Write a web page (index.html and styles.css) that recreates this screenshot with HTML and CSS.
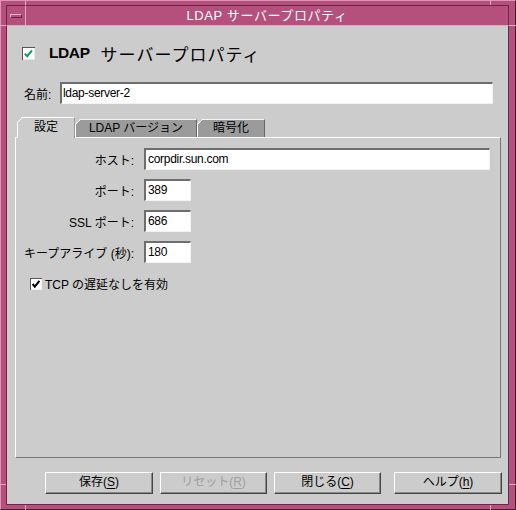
FILE: index.html
```html
<!DOCTYPE html>
<html lang="ja">
<head>
<meta charset="utf-8">
<title>LDAP サーバープロパティ</title>
<link rel="stylesheet" href="styles.css">
</head>
<body>
<div class="frame">
  <span class="mark v tl"></span>
  <span class="mark h lt"></span>
  <span class="mark v tr"></span>
  <span class="mark h rt"></span>
  <span class="mark h lb"></span>
  <span class="mark v bl"></span>
  <span class="mark v br"></span>
  <span class="mark h rb"></span>
  <div class="titlebar">
    <div class="menubtn"><span class="minus"></span></div>
    <div class="title">LDAP サーバープロパティ</div>
  </div>
  <div class="client">
    <div class="heading">
      <svg class="bigcheck" width="13" height="13" viewBox="0 0 13 13">
        <rect x="0" y="0" width="13" height="13" fill="#555"/>
        <rect x="1" y="1" width="12" height="12" fill="#e8e8e8"/>
        <rect x="1" y="1" width="11" height="11" fill="#fff"/>
        <path d="M2.8 6.6 L5.2 9.2 L10 3.4" fill="none" stroke="#16946a" stroke-width="2"/>
      </svg>
      <span class="h-latin">LDAP</span><span class="h-jp">サーバープロパティ</span>
    </div>
    <div class="namerow">
      <span class="namelabel">名前:</span>
      <div class="field namefield">ldap-server-2</div>
    </div>
    <div class="tabs">
      <div class="tab sel tab1">設定</div>
      <div class="tab tab2">LDAP バージョン</div>
      <div class="tab tab3">暗号化</div>
    </div>
    <div class="panel">
      <div class="form">
        <span class="lbl">ホスト:</span>
        <div class="field hostfield">corpdir.sun.com</div>
        <span class="lbl">ポート:</span>
        <div class="field portfield">389</div>
        <span class="lbl">SSL ポート:</span>
        <div class="field portfield">686</div>
        <span class="lbl">キープアライブ (秒):</span>
        <div class="field portfield">180</div>
      </div>
      <div class="cbrow">
        <svg class="smallcheck" width="12" height="12" viewBox="0 0 12 12">
          <rect x="0" y="0" width="12" height="12" fill="#5a5a5a"/>
          <rect x="1" y="1" width="11" height="11" fill="#f4f4f4"/>
          <rect x="1" y="1" width="10" height="10" fill="#fff"/>
          <path d="M2.6 6 L4.8 8.6 L9.4 2.8" fill="none" stroke="#000" stroke-width="2"/>
        </svg>
        <span>TCP の遅延なしを有効</span>
      </div>
    </div>
    <div class="buttons">
      <div class="btn b1">保存(<u>S</u>)</div>
      <div class="btn b2 disabled">リセット(<u>R</u>)</div>
      <div class="btn b3">閉じる(<u>C</u>)</div>
      <div class="btn b4">ヘルプ(<u>h</u>)</div>
    </div>
  </div>
</div>
</body>
</html>
```
FILE: styles.css
```css
html, body {
  margin: 0;
  padding: 0;
}
body {
  width: 516px;
  height: 510px;
  overflow: hidden;
  font-family: "Liberation Sans", "Noto Sans CJK JP", sans-serif;
  font-size: 12px;
  color: #000;
}
.frame {
  position: relative;
  box-sizing: border-box;
  width: 516px;
  height: 510px;
  background: #b5507c;
  border: 1px solid;
  border-color: #dc96b4 #4d1830 #4d1830 #dc96b4;
  padding: 4px 6px 4px 5px;
  display: flex;
  flex-direction: column;
}
.mark {
  position: absolute;
  background: #e6a6c2;
}
.mark.v { width: 1px; height: 5px; }
.mark.h { width: 6px; height: 1px; }
.mark.tl { left: 24px; top: -1px; }
.mark.lt { left: -1px; top: 24px; }
.mark.tr { left: 489px; top: -1px; }
.mark.rt { right: -1px; top: 24px; width: 7px; }
.mark.lb { left: -1px; top: 483px; }
.mark.bl { left: 24px; bottom: -1px; }
.mark.br { left: 489px; bottom: -1px; }
.mark.rb { right: -1px; top: 483px; width: 7px; }

.titlebar {
  display: flex;
  height: 21px;
  flex: none;
}
.menubtn {
  box-sizing: border-box;
  width: 20px;
  height: 21px;
  border-style: solid;
  border-width: 1px;
  border-color: #6b2545 #e4a3c0 #e4a3c0 #6b2545;
  display: flex;
  align-items: center;
  justify-content: center;
}
.minus {
  box-sizing: border-box;
  width: 12px;
  height: 4px;
  border: 1px solid;
  border-color: #ecb4cd #6b2545 #6b2545 #ecb4cd;
  background: #b5507c;
}
.title {
  flex: 1;
  box-sizing: border-box;
  height: 21px;
  border-style: solid;
  border-width: 1px 1px 1px 0;
  border-color: #6b2545 #6b2545 #e4a3c0 #6b2545;
  color: #fff;
  text-align: center;
  line-height: 19px;
  font-size: 13px;
  letter-spacing: 0.6px;
}
.client {
  flex: 1;
  background: #cccccc;
  border-left: 1px solid #6b2545;
  border-right: 1px solid #6b2545;
  border-bottom: 1px solid #6b2545;
  display: flex;
  flex-direction: column;
  padding-top: 18px;
}
.heading {
  display: flex;
  align-items: center;
  height: 18px;
  margin-left: 15px;
}
.bigcheck {
  flex: none;
  margin-right: 14px;
  margin-top: 1px;
}
.h-latin {
  font-weight: bold;
  font-size: 15.5px;
  letter-spacing: -0.4px;
}
.h-jp {
  margin-left: 11px;
  font-size: 17px;
  letter-spacing: 1px;
}
.namerow {
  display: flex;
  align-items: center;
  margin-top: 20px;
  margin-left: 17px;
}
.namelabel {
  width: 36px;
}
.field {
  box-sizing: border-box;
  height: 22px;
  background: #fff;
  border-style: solid;
  border-width: 2px 1px 1px 2px;
  border-color: #6e6e6e #f2f2f2 #f2f2f2 #6e6e6e;
  padding-left: 2px;
  line-height: 19px;
  letter-spacing: -0.3px;
  white-space: nowrap;
}
.namefield {
  width: 433px;
  padding-left: 1px;
}
.tabs {
  display: flex;
  align-items: flex-end;
  height: 20px;
  margin-top: 13px;
  margin-left: 10px;
}
.tab {
  box-sizing: border-box;
  height: 18px;
  border-top: 1px solid #f4f4f4;
  border-left: 1px solid #fff;
  border-right: 1px solid #666;
  background-origin: border-box;
  background-image: linear-gradient(135deg, transparent 3.6px, #fff 3.6px, #fff 4.8px, #9b9b9b 4.8px);
  clip-path: polygon(5px 0, 100% 0, 100% 100%, 0 100%, 0 5px);
  text-align: center;
  line-height: 16px;
  white-space: nowrap;
}
.tab.sel {
  position: relative;
  z-index: 1;
  height: 21px;
  margin-bottom: -1px;
  border-top-color: #fff;
  border-right-color: #9a9a9a;
  background-image: linear-gradient(135deg, transparent 3.6px, #fff 3.6px, #fff 4.8px, #cccccc 4.8px);
  line-height: 18px;
}
.tab1 { width: 58px; }
.tab2 { width: 122px; }
.tab3 { width: 68px; }
.panel {
  box-sizing: border-box;
  width: 486px;
  height: 321px;
  margin-left: 8px;
  border-style: solid;
  border-width: 1px;
  border-color: #fff #777 #777 #fff;
  display: flex;
  flex-direction: column;
}
.form {
  display: grid;
  grid-template-columns: 118px auto;
  column-gap: 10px;
  row-gap: 9px;
  align-items: center;
  justify-items: start;
  padding-top: 10px;
}
.lbl {
  justify-self: end;
  white-space: nowrap;
}
.hostfield { width: 346px; }
.portfield { width: 47px; }
.cbrow {
  display: flex;
  align-items: center;
  margin-top: 12px;
  margin-left: 14px;
}
.smallcheck {
  flex: none;
  margin-right: 3px;
}
.buttons {
  display: flex;
  margin-top: 14px;
  margin-left: 38px;
  gap: 7px;
}
.btn {
  box-sizing: border-box;
  height: 22px;
  border-style: solid;
  border-width: 1px;
  border-color: #fff #444 #444 #fff;
  box-shadow: inset -1px -1px 0 #8a8a8a;
  text-align: center;
  line-height: 19px;
  white-space: nowrap;
}
.btn u {
  text-underline-offset: 2px;
}
.b1 { width: 108px; }
.b2 { width: 107px; }
.b3 { width: 107px; }
.b4 { width: 108px; margin-left: 6px; }
.disabled { color: #a0a0a0; }
```
